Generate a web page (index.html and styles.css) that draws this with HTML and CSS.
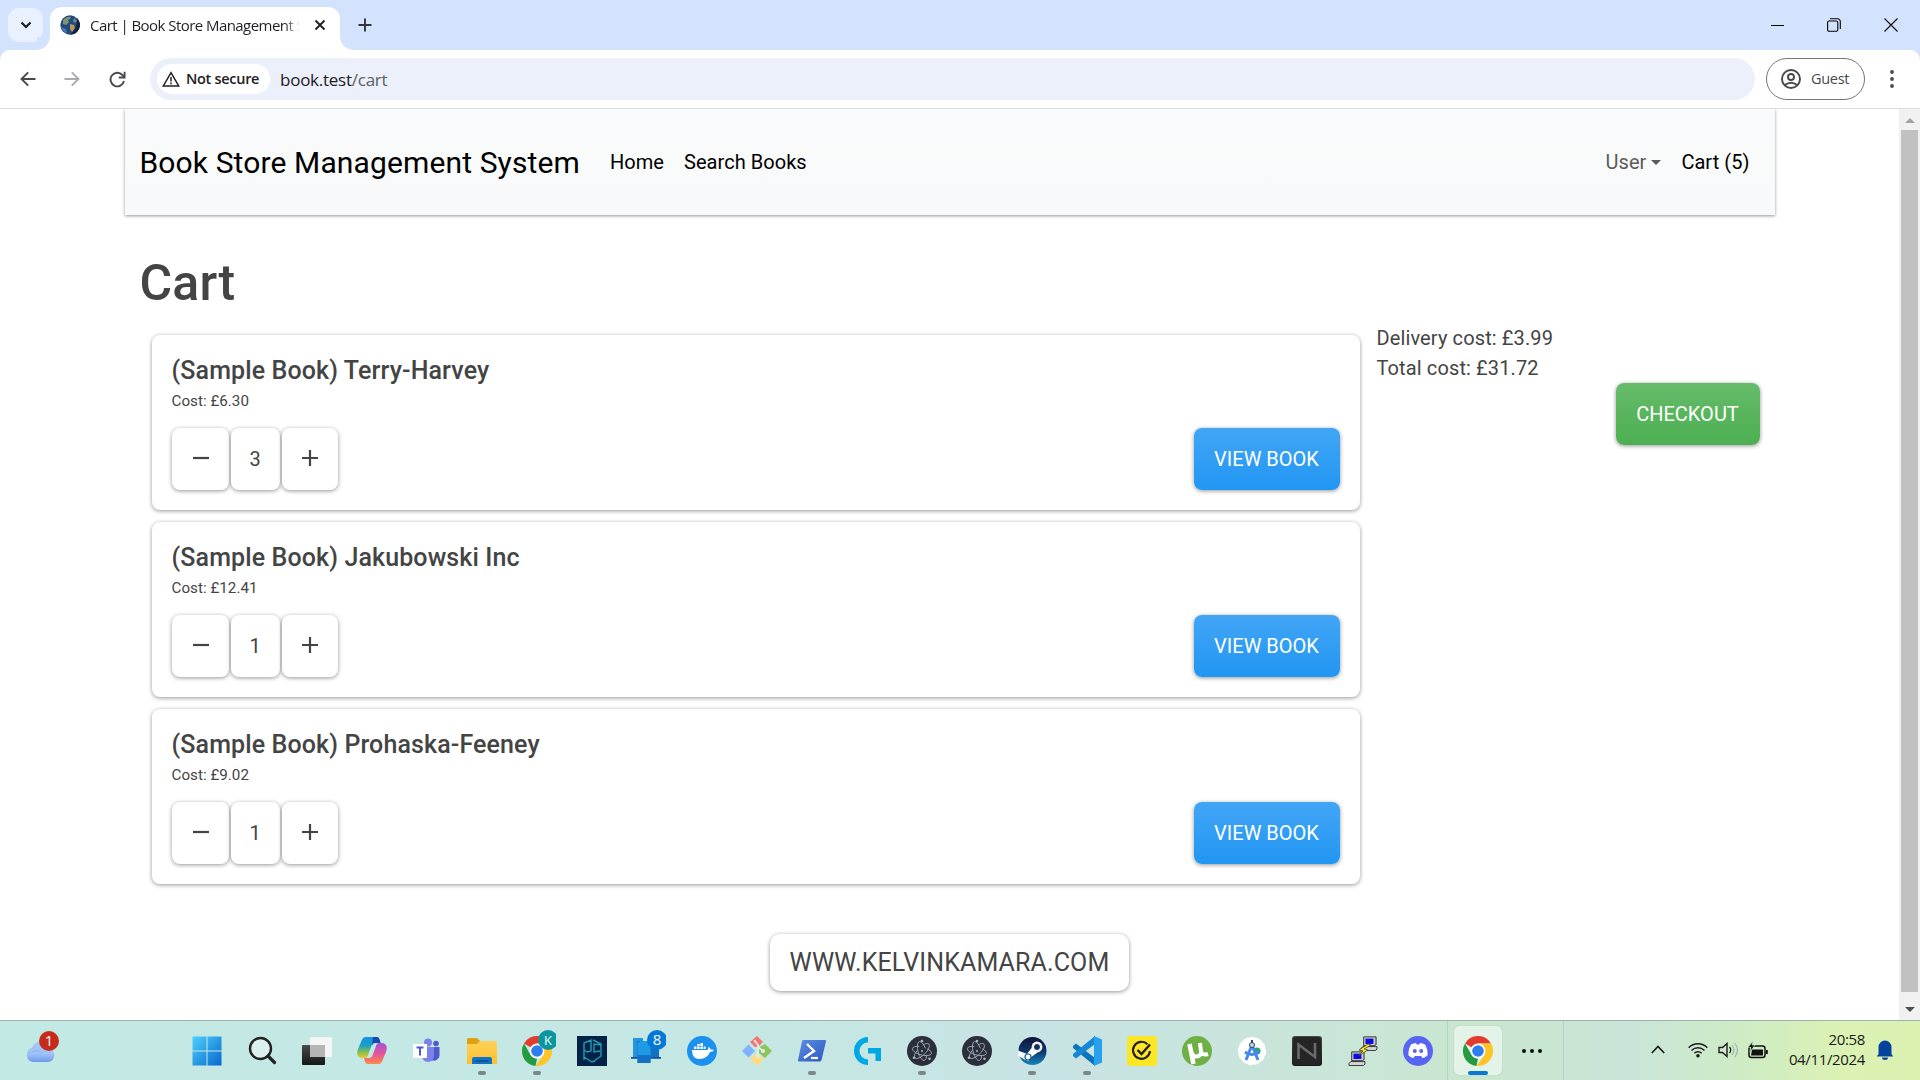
FILE: index.html
```html
<!DOCTYPE html>
<html lang="en">
<head>
<meta charset="utf-8">
<title>Cart | Book Store Management System</title>
<link rel="stylesheet" href="styles.css">
</head>
<body>
<svg class="defs" width="0" height="0">
  <defs>
    <linearGradient id="gwin" x1="0" y1="0" x2="1" y2="1"><stop offset="0" stop-color="#4fd0fb"/><stop offset="1" stop-color="#0568cf"/></linearGradient>
    <linearGradient id="gcloud" x1="0" y1="0" x2="0" y2="1"><stop offset="0" stop-color="#a5c6f5"/><stop offset=".6" stop-color="#9fc3f5"/><stop offset="1" stop-color="#6d98ec"/></linearGradient>
    <linearGradient id="gdark" x1="0" y1="0" x2="0" y2="1"><stop offset="0" stop-color="#4a4a4a"/><stop offset="1" stop-color="#161616"/></linearGradient>
    <linearGradient id="gco1" x1="0" y1="0" x2="0" y2="1"><stop offset="0" stop-color="#1593e6"/><stop offset=".4" stop-color="#199fc9"/><stop offset=".7" stop-color="#7cbf56"/><stop offset="1" stop-color="#f0c52a"/></linearGradient>
    <linearGradient id="gco2" x1="0" y1="0" x2="0" y2="1"><stop offset="0" stop-color="#a254dc"/><stop offset=".5" stop-color="#e5549a"/><stop offset="1" stop-color="#ff8a4a"/></linearGradient>
    <linearGradient id="gfold" x1="0" y1="0" x2="0" y2="1"><stop offset="0" stop-color="#ffd257"/><stop offset="1" stop-color="#fcc02e"/></linearGradient>
    <linearGradient id="gsteam" x1="0" y1="0" x2="0" y2="1"><stop offset="0" stop-color="#10133a"/><stop offset=".5" stop-color="#0d3567"/><stop offset="1" stop-color="#1787bd"/></linearGradient>
    <linearGradient id="gps" x1="0" y1="0" x2="1" y2="1"><stop offset="0" stop-color="#5a8fe0"/><stop offset="1" stop-color="#2d57c4"/></linearGradient>
    <symbol id="chrome" viewBox="0 0 30 30">
      <path d="M15 15 2.01 7.5A15 15 0 0 1 28 7.5L15 7.5z" fill="#e33b2e"/>
      <path d="M2.01 7.5 8.5 18.75A7.5 7.5 0 0 0 15 22.5L13.5 30A15 15 0 0 1 2.01 7.5z" fill="#259a42"/>
      <path d="M15 7.5H28A15 15 0 0 1 13.6 29.95L21.5 18.75z" fill="#fdc526"/>
      <circle cx="15" cy="15" r="7.5" fill="#fff"/><circle cx="15" cy="15" r="5.8" fill="#2d7ff0"/>
    </symbol>
    <symbol id="electron" viewBox="0 0 30 30">
      <circle cx="15" cy="15" r="15" fill="#2c2e3b"/>
      <g fill="none" stroke="#93a9b0" stroke-width=".9"><ellipse cx="15" cy="15" rx="9.8" ry="4" transform="rotate(75 15 15)" stroke-dasharray="32 7"/><ellipse cx="15" cy="15" rx="9.8" ry="4" transform="rotate(15 15 15)" stroke-dasharray="30 8"/><ellipse cx="15" cy="15" rx="9.8" ry="4" transform="rotate(-45 15 15)" stroke-dasharray="31 7"/></g>
      <g fill="#a3b9bf"><circle cx="15" cy="15" r="1"/><circle cx="15" cy="5" r="1.3"/><circle cx="7" cy="21.800" r="1.3"/><circle cx="22.500" cy="22.800" r="1.3"/></g>
    </symbol>
    <symbol id="pc" viewBox="0 0 20 17">
      <path d="M4 1h14v9l-2 1H4z" fill="#c8c8c8" stroke="#222" stroke-width="1"/><path d="M6 3h9v6H6z" fill="#0808e8"/>
      <path d="M3 12h14l2 0v3l-2 1.5H1V14z" fill="#d4d4d4" stroke="#222" stroke-width="1"/>
    </symbol>
  </defs>
</svg>
<div class="screen">
  <header class="tabstrip">
    <button class="tab-search"><svg width="12" height="8" viewBox="0 0 12 8"><path d="M1.500 1.500 6 6l4.500-4.500" fill="none" stroke="#1b1c1f" stroke-width="2.200"/></svg></button>
    <div class="tab">
      <svg width="20" height="20" viewBox="0 0 20 20"><circle cx="10" cy="10" r="9.700" fill="#234a7c"/><path d="M10 19.700A9.700 9.700 0 0 0 17 3q1 10-7 16.700z" fill="#12213f"/><path d="M3 5q4-4 8-3l-1 2-2 1 1 2-3 3-3-1z" fill="#7f9672"/><path d="M10 9l4 1 1 3-3 4-2-3z" fill="#b39b58"/><path d="M14 3l3 3-2 2-2-2z" fill="#6e8a8c"/><path d="M1 12q2 5 6 6l-1-4z" fill="#4c79b5"/></svg>
      <span class="tab-title">Cart | Book Store Management System</span>
      <svg class="tab-close" width="12" height="12" viewBox="0 0 12 12"><path d="M1.500 1.500l9 9m0-9l-9 9" stroke="#202124" stroke-width="1.900"/></svg>
    </div>
    <svg class="new-tab" width="14" height="14" viewBox="0 0 14 14"><path d="M7 .5v13M.5 7h13" stroke="#333539" stroke-width="1.900"/></svg>
    <div class="win-controls">
      <svg width="13" height="13" viewBox="0 0 13 13"><path d="M0 6.500h13" stroke="#000" stroke-width="1"/></svg>
      <svg width="14" height="14" viewBox="0 0 14 14"><rect x=".6" y="3" width="10.200" height="10.200" rx="1.500" fill="none" stroke="#000" stroke-width="1.100"/><path d="M3 .8h7.500a2.800 2.800 0 0 1 2.800 2.800V11" fill="none" stroke="#000" stroke-width="1.100"/></svg>
      <svg width="14" height="14" viewBox="0 0 14 14"><path d="M.5.5l13 13m0-13l-13 13" stroke="#111" stroke-width="1.200"/></svg>
    </div>
  </header>
  <div class="toolbar">
    <svg class="ic-back" width="16" height="16" viewBox="0 0 16 16"><path d="M15.500 8H1.500M8.200 1.300 1.500 8l6.700 6.700" fill="none" stroke="#46484b" stroke-width="1.900"/></svg>
    <svg class="ic-fwd" width="16" height="16" viewBox="0 0 16 16"><path d="M.5 8h14M7.800 1.300 14.500 8l-6.700 6.700" fill="none" stroke="#a9abae" stroke-width="1.900"/></svg>
    <svg class="ic-reload" width="17" height="17" viewBox="0 0 17 17"><path d="M15 10a6.800 6.800 0 1 1-1.600-6L15.300 6" fill="none" stroke="#46484b" stroke-width="1.900"/><path d="M15.600.8V6.500H9.800" fill="none" stroke="#46484b" stroke-width="1.900"/></svg>
    <div class="omnibox">
      <div class="chip"><svg width="18" height="16" viewBox="0 0 18 16"><path d="M9 1.700 16.700 14.900H1.300z" fill="none" stroke="#1f2023" stroke-width="1.500"/><path d="M9 6v4.500M9 11.600v1.700" stroke="#1f2023" stroke-width="1.500"/></svg><span>Not secure</span></div>
      <span class="url">book.test<i>/cart</i></span>
    </div>
    <div class="guest"><svg width="20" height="20" viewBox="0 0 20 20"><g fill="none" stroke="#47494c" stroke-width="1.900"><circle cx="10" cy="10" r="9"/><circle cx="10" cy="8" r="3"/><path d="M3.800 16q6.200-4.600 12.400 0"/></g></svg><span>Guest</span></div>
    <svg class="ic-menu" width="4" height="18" viewBox="0 0 4 18"><g fill="#47494c"><circle cx="2" cy="2" r="1.900"/><circle cx="2" cy="9" r="1.900"/><circle cx="2" cy="16" r="1.900"/></g></svg>
  </div>
  <div class="viewport">
    <div class="page">
      <nav class="navbar">
        <a class="brand">Book Store Management System</a>
        <a class="link">Home</a>
        <a class="link">Search Books</a>
        <a class="link user">User<b class="caret"></b></a>
        <a class="link cart">Cart (5)</a>
      </nav>
      <h1>Cart</h1>
      <div class="cols">
        <div class="items">
          <section class="card">
            <h2>(Sample Book) Terry-Harvey</h2>
            <p class="cost">Cost: £6.30</p>
            <div class="row">
              <button class="qty"><svg width="16" height="16" viewBox="0 0 16 16"><path d="M0 8h16" stroke="#444" stroke-width="2.200"/></svg></button><span class="num">3</span><button class="qty plus"><svg width="16" height="16" viewBox="0 0 16 16"><path d="M0 8h16M8 0v16" stroke="#444" stroke-width="2.200"/></svg></button>
              <button class="btn blue">VIEW BOOK</button>
            </div>
          </section>
          <section class="card">
            <h2>(Sample Book) Jakubowski Inc</h2>
            <p class="cost">Cost: £12.41</p>
            <div class="row">
              <button class="qty"><svg width="16" height="16" viewBox="0 0 16 16"><path d="M0 8h16" stroke="#444" stroke-width="2.200"/></svg></button><span class="num">1</span><button class="qty plus"><svg width="16" height="16" viewBox="0 0 16 16"><path d="M0 8h16M8 0v16" stroke="#444" stroke-width="2.200"/></svg></button>
              <button class="btn blue">VIEW BOOK</button>
            </div>
          </section>
          <section class="card">
            <h2>(Sample Book) Prohaska-Feeney</h2>
            <p class="cost">Cost: £9.02</p>
            <div class="row">
              <button class="qty"><svg width="16" height="16" viewBox="0 0 16 16"><path d="M0 8h16" stroke="#444" stroke-width="2.200"/></svg></button><span class="num">1</span><button class="qty plus"><svg width="16" height="16" viewBox="0 0 16 16"><path d="M0 8h16M8 0v16" stroke="#444" stroke-width="2.200"/></svg></button>
              <button class="btn blue">VIEW BOOK</button>
            </div>
          </section>
        </div>
        <aside class="summary">
          <p>Delivery cost: £3.99</p>
          <p>Total cost: £31.72</p>
          <button class="btn green">CHECKOUT</button>
        </aside>
      </div>
      <a class="site">WWW.KELVINKAMARA.COM</a>
    </div>
    <div class="scrollbar"><i class="up"></i><b class="thumb"></b><i class="down"></i></div>
  </div>
  <footer class="taskbar">
    <div class="weather"><svg width="36" height="34" viewBox="0 0 36 34"><path d="M8 31a7.500 7.500 0 0 1-1-14.500 9 9 0 0 1 17 .5A7.300 7.300 0 0 1 24 31z" fill="url(#gcloud)"/><path d="M6 22q6-5 11 0" fill="none" stroke="#8fb2ef" stroke-width="1"/><circle cx="24" cy="10" r="10" fill="#c42b1c"/><text x="24" y="15" class="badge-t">1</text></svg></div>
    <div class="app"><svg width="30" height="30" viewBox="0 0 30 30"><path d="M.5.5h14v14H.5zM15.500.5h14v14h-14zM.5 15.500h14v14H.5zM15.500 15.500h14v14h-14z" fill="url(#gwin)"/></svg></div>
    <div class="app"><svg width="30" height="30" viewBox="0 0 30 30"><circle cx="13.500" cy="12.500" r="10.500" fill="#dcefed" stroke="#222" stroke-width="2.400"/><path d="M21 20l6.500 6.500" stroke="#222" stroke-width="3.200" stroke-linecap="round"/></svg></div>
    <div class="app"><svg width="30" height="30" viewBox="0 0 30 30"><rect x="0" y="9" width="23" height="20" rx="1" fill="url(#gdark)"/><rect x="8" y="1" width="22" height="20" rx="1" fill="#f5f5f5"/><path d="M8 9h15v12H8z" fill="#b5b5b5"/></svg></div>
    <div class="app"><svg width="30" height="30" viewBox="0 0 30 30"><path d="M9 1h10c3 0 3 3 4 6h-5c-2 0-3 1-4 4l-3 8c-1 3-2 3-5 3-5 0-7-3-5-9L4 6c1-3 2-5 5-5z" fill="url(#gco1)"/><path d="M16 1h4c2 0 3 3 3.600 6H18c-2 0-2 1-3 3z" fill="#1748b5"/><path d="M21 28H11c-3 0-3-3-4-6h5c2 0 3-1 4-4l3-8c1-3 2-3 5-3 5 0 7 3 5 9l-3 7c-1 3-2 5-5 5z" fill="url(#gco2)"/></svg></div>
    <div class="app"><svg width="30" height="30" viewBox="0 0 30 30"><circle cx="16" cy="6.500" r="4" fill="#7b83eb"/><circle cx="24" cy="7.500" r="2.800" fill="#5059c9"/><path d="M17 11h10.500v9a5.500 5.500 0 0 1-8 4z" fill="#5059c9"/><path d="M10 11h12v9a6 6 0 0 1-12 0z" fill="#7b83eb"/><path d="M1 8h14v14H1z" fill="#fff"/><path d="M4.500 11.500h7M8 11.500V19.500" stroke="#5059c9" stroke-width="2"/></svg></div>
    <div class="app run"><svg width="30" height="30" viewBox="0 0 30 30"><path d="M0 3.500Q0 2 1.500 2h8.500l3 3-2 5H0z" fill="#dfa10f"/><path d="M0 8h10l3-3h15.500Q30 5 30 6.500V28H0z" fill="url(#gfold)"/><path d="M5 23q0-2 2-2h16q2 0 2 2v5H5z" fill="#1273c6"/><path d="M8.500 25h13" stroke="#0a4b8c" stroke-width="1.500"/></svg></div>
    <div class="app run"><svg width="38" height="42" viewBox="0 0 38 42"><use href="#chrome" x="4" y="6" width="30" height="30"/><circle cx="30" cy="10" r="10" fill="#0d94a0"/><text x="30" y="14.800" class="badge-t small">K</text></svg></div>
    <div class="app"><svg width="30" height="30" viewBox="0 0 30 30"><path d="M0 0h30v30H0z" fill="#032248"/><g fill="none" stroke="#1f9cb0" stroke-width="1.400"><path d="M7 24V7l7-3v11l-4 1-3-2M16 4l8 4v12l-7 5M23 15l-6 1V8l7 1M7 21l8 5 3-1"/></g></svg></div>
    <div class="app"><svg width="38" height="42" viewBox="0 0 38 42"><path d="M5 8h10v19H5z" fill="#2693dc"/><path d="M9 11h22v16H9z" fill="#1272c2"/><path d="M3 27h30v1.800H3z" fill="#10529a"/><path d="M9.500 13l3-2h10v22h-13z" fill="#1f9be5"/><path d="M9.500 25h13v8h-13z" fill="#1470c4"/><circle cx="29" cy="10" r="10" fill="#0378d6"/><text x="29" y="15.300" class="badge-t">8</text></svg></div>
    <div class="app"><svg width="30" height="30" viewBox="0 0 30 30"><circle cx="15" cy="15" r="15" fill="#1c90ed"/><path d="M5 14h15.500q1.500-1 .8-3.300 2.200 1 2.300 2.800 2-.3 3.400.5-1 2-4 2-3 7-10.500 7Q5 23 5 14z" fill="#fff"/><path d="M7 10.500h2.500V13H7zM10.200 10.500h2.500V13h-2.500zM13.400 10.500h2.500V13h-2.500zM16.600 10.500h2V13h-2zM10.200 8h2.500v2h-2.500zM13.400 7h2.500v3h-2.500z" fill="#fff"/></svg></div>
    <div class="app"><svg width="30" height="30" viewBox="0 0 30 30"><path d="M15 0l6 6-5 5h-3L8 6z" fill="#f77370"/><path d="M6.500 8.500 13 15l-6.500 6.500L0 15z" fill="#80b3ff"/><path d="M23 8l7 7-7 7-7-6v-4z" fill="#8dc45c"/><path d="M15 17l7 6-7 7-7-7z" fill="#ffdc83"/><path d="M12 4l4 5v10M16 11l5 4" stroke="#dcefe8" stroke-width="1.800" fill="none"/><circle cx="16" cy="20" r="2" fill="#dcefe8"/><circle cx="21" cy="15" r="2" fill="#dcefe8"/></svg></div>
    <div class="app run"><svg width="30" height="30" viewBox="0 0 30 30"><path d="M6 4h22q1.500 0 1 1.500L24.500 24q-.5 1.500-2 1.500H2Q.5 25.500 1 24L5 5.500Q5.300 4 6 4z" fill="url(#gps)"/><path d="M10 8l7 7-10 7" fill="none" stroke="#fff" stroke-width="2.400"/><path d="M14 22h7" stroke="#fff" stroke-width="2.200"/></svg></div>
    <div class="app"><svg width="30" height="30" viewBox="0 0 30 30"><path d="M16 1v5.500a8.500 8.500 0 0 0 0 17V29A14 14 0 0 1 16 1zM16 12h13v13h-5.500v-7.500H16z" fill="#00a8e4"/></svg></div>
    <div class="app run"><svg width="30" height="30"><use href="#electron"/></svg></div>
    <div class="app"><svg width="30" height="30"><use href="#electron"/></svg></div>
    <div class="app run"><svg width="30" height="30" viewBox="0 0 30 30"><circle cx="15.500" cy="15" r="14" fill="url(#gsteam)"/><path d="M1 14.500l9 3.500 4.500-6 6 4.500-5.500 4-3.500 4.500-4-1.500L1.500 20z" fill="#fff"/><circle cx="20" cy="11" r="5.400" fill="#fff"/><circle cx="20" cy="11" r="3.500" fill="#0f2e5c" stroke="#fff"/><circle cx="11" cy="21" r="3" fill="none" stroke="#0e5b94" stroke-width="1.200"/></svg></div>
    <div class="app run"><svg width="30" height="30" viewBox="0 0 30 30"><path d="M1 10l3-2.500L23 22v8L1 12z" fill="#0b74bd"/><path d="M1 20l3 2.500L23 8V0L1 18z" fill="#1687d3"/><path d="M22 0l8 3.500v23L22 30z" fill="#27a0ee"/></svg></div>
    <div class="app"><svg width="30" height="30" viewBox="0 0 30 30"><rect width="30" height="30" rx="3" fill="#fde725"/><path d="M20.500 8.200A8.500 8.500 0 1 0 23 15" fill="none" stroke="#221f1a" stroke-width="2.200"/><path d="M10.500 14l4 4L23 8.500" fill="none" stroke="#221f1a" stroke-width="2.400"/></svg></div>
    <div class="app"><svg width="30" height="30" viewBox="0 0 30 30"><circle cx="15" cy="15" r="15" fill="#6fb044"/><path d="M7.500 8l4 20" stroke="#fff" stroke-width="4.500"/><path d="M9.500 16q1 5 5.500 4.500 4.500-1 4-5L18 7M19 15q1 5 7 3" fill="none" stroke="#fff" stroke-width="4"/></svg></div>
    <div class="app"><svg width="30" height="30" viewBox="0 0 30 30"><circle cx="15" cy="15" r="13.700" fill="#fff" stroke="#fff" stroke-dasharray="4 3"/><circle cx="20" cy="15" r="3.500" fill="#2ca56b"/><path d="M15 9 9 24M15 9l6 15M8 16q7 5 14 0" fill="none" stroke="#4687ef" stroke-width="3"/><circle cx="15" cy="9" r="2.500" fill="#c5d7ea" stroke="#35455c"/><path d="M15 4v3" stroke="#35455c" stroke-width="2"/></svg></div>
    <div class="app"><svg width="30" height="30" viewBox="0 0 30 30"><rect width="30" height="30" rx="3" fill="url(#gdark)"/><rect x="1" y="1" width="28" height="28" rx="3" fill="#252525"/><path d="M6.500 23V8.500L23 21V7" fill="none" stroke="#6b6b6b" stroke-width="2.600"/></svg></div>
    <div class="app"><svg width="30" height="30" viewBox="0 0 30 30"><use href="#pc" x="12" y="0" width="18" height="15"/><use href="#pc" x="0" y="15" width="18" height="15"/><path d="M20 8l-9 6 4 1-5 5 10-6-4-1 7-4z" fill="#ffe81c" stroke="#333" stroke-width=".7"/></svg></div>
    <div class="app"><svg width="30" height="30" viewBox="0 0 30 30"><circle cx="15" cy="15" r="15" fill="#5865f2"/><path d="M8 8.500q2.500-1.200 5-1.400l.7 1.400h2.600l.7-1.400q2.500.2 5 1.400 3 5 2.500 11-2.500 2-5 2.500l-1.300-2h-6.400l-1.300 2q-2.500-.5-5-2.500Q5 13.500 8 8.500z" fill="#fff"/><circle cx="11.800" cy="15" r="2" fill="#5865f2"/><circle cx="18.200" cy="15" r="2" fill="#5865f2"/></svg></div>
    <div class="active-zone"><div class="active"><svg width="30" height="30"><use href="#chrome"/></svg></div><svg width="20" height="4" viewBox="0 0 20 4"><g fill="#111"><circle cx="2" cy="2" r="2"/><circle cx="10" cy="2" r="2"/><circle cx="18" cy="2" r="2"/></g></svg></div>
    <div class="tray">
      <svg width="14" height="9" viewBox="0 0 14 9"><path d="M.8 8 7 1.500 13.200 8" fill="none" stroke="#181818" stroke-width="1.600"/></svg>
      <svg class="wifi" width="20" height="16" viewBox="0 0 20 16"><g fill="none" stroke="#1c1c1c" stroke-width="1.400"><path d="M.7 5.700a13 13 0 0 1 18.600 0M3.500 8.500a9.200 9.200 0 0 1 13 0M6.300 11.200a5.300 5.300 0 0 1 7.400 0"/></g><circle cx="10" cy="13.700" r="1.800" fill="#1c1c1c"/></svg>
      <svg class="vol" width="21" height="16" viewBox="0 0 21 16"><path d="M1 5.500h3.500L9 1.500v13l-4.500-4H1z" fill="none" stroke="#1c1c1c" stroke-width="1.400"/><path d="M11.500 5q2.500 3 0 6" fill="none" stroke="#1c1c1c" stroke-width="1.300"/><path d="M14 3q4 5 0 10M16.800 1q5.500 7 0 14" fill="none" stroke="#9fb5a5" stroke-width="1.200"/></svg>
      <svg class="bat" width="20" height="18" viewBox="0 0 20 18"><rect x="1" y="5" width="16" height="11.500" rx="2.500" fill="none" stroke="#111" stroke-width="1.500"/><path d="M3 14.500l1-6h11v6z" fill="#111"/><path d="M18 9h1.800v4H18z" fill="#111"/><path d="M5 0 0 6.500h3L2 11l5-7H4z" fill="#111" stroke="#cfe9c6" stroke-width=".6"/></svg>
      <div class="clock"><span>20:58</span><span>04/11/2024</span></div>
      <svg class="bell" width="18" height="20" viewBox="0 0 18 20"><path d="M2.500 14V7a6.500 6.500 0 0 1 13 0v7l1.700 2.500H.8zM6 17.500h6a3 2.500 0 0 1-6 0z" fill="#04429c"/></svg>
    </div>
  </footer>
</div>
</body>
</html>
```
FILE: styles.css
```css
* { box-sizing: border-box; }
body { margin: 0; overflow: hidden; background: #fff; font-family: Roboto, sans-serif; color: #444; }
svg { display: block; flex: none; }
.defs { position: absolute; }
button { border: 0; padding: 0; font: inherit; color: inherit; background: none; }
h1, h2, p { margin: 0; }
.screen { width: 1920px; height: 1080px; display: flex; flex-direction: column; background: #d3e3fd; }

.tabstrip { height: 50px; display: flex; align-items: center; padding-left: 8px; flex: none; font-family: "Open Sans", "Noto Sans", sans-serif; }
.tab-search { width: 35px; height: 34px; border-radius: 11px; background: #e9f0fe; display: grid; place-items: center; margin-right: 7px; }
.tab { width: 290px; height: 43px; margin-top: 7px; background: #fff; border-radius: 12px 12px 0 0; display: flex; align-items: center; padding: 0 14px 7px 10px; position: relative; }
.tab::before, .tab::after { content: ""; position: absolute; bottom: 0; width: 13px; height: 13px; }
.tab::before { left: -13px; background: radial-gradient(circle at 0 0, #d3e3fd 12.500px, #fff 13px); }
.tab::after { right: -13px; background: radial-gradient(circle at 100% 0, #d3e3fd 12.500px, #fff 13px); }
.tab-title { margin-left: 10px; width: 212px; font-size: 15px; letter-spacing: -.55px; color: #1f2023; white-space: nowrap; overflow: hidden; -webkit-mask-image: linear-gradient(90deg, #000 92%, transparent 99%); mask-image: linear-gradient(90deg, #000 92%, transparent 99%); }
.tab-close { margin-left: auto; }
.new-tab { margin-left: 18px; }
.win-controls { margin-left: auto; display: flex; align-items: center; gap: 43px; padding-right: 22px; }

.toolbar { height: 59px; flex: none; background: #fff; border-bottom: 1px solid #dcdfdc; border-radius: 10px 10px 0 0; display: flex; align-items: center; padding-left: 20px; font-family: "Open Sans", "Noto Sans", sans-serif; }
.ic-fwd { margin-left: 28px; }
.ic-reload { margin-left: 29px; }
.omnibox { margin-left: 24px; width: 1605px; height: 42px; border-radius: 21px; background: #ebf0fa; display: flex; align-items: center; padding-left: 7px; }
.chip { width: 113px; height: 30px; border-radius: 15px; background: #fff; display: flex; align-items: center; padding-left: 5px; gap: 6px; font-size: 14.500px; font-weight: 600; letter-spacing: -.3px; color: #1f2023; white-space: nowrap; }
.chip span, .guest span { padding-bottom: 2px; }
.url { margin-left: 10px; font-size: 17px; letter-spacing: -.25px; color: #1f2023; }
.url i { font-style: normal; color: #5b5e63; }
.guest { margin-left: 11px; width: 99px; height: 42px; border: 1.500px solid #747775; border-radius: 21px; display: flex; align-items: center; padding-left: 14px; gap: 10px; font-size: 14.500px; letter-spacing: -.3px; color: #47494c; }
.ic-menu { margin-left: 25px; }

.viewport { height: 911px; flex: none; display: flex; background: #fff; }
.page { width: 1899px; display: flex; flex-direction: column; align-items: center; }
.navbar { width: 1650px; height: 106px; background: linear-gradient(#f9fafc, #f9fafa 45%, #f8f9fb); box-shadow: 0 1px 3px rgba(0, 0, 0, .42); clip-path: inset(0 -6px -6px -6px); display: flex; align-items: center; padding: 0 25px 0 15px; font-size: 20px; letter-spacing: .05px; color: #000; white-space: nowrap; }
.brand { font-size: 30px; letter-spacing: .125px; margin-right: 30px; }
.link { margin-right: 20px; }
.user { margin-left: auto; color: #5b5b5b; display: flex; align-items: center; }
.caret { margin-left: 5px; border: 5px solid transparent; border-top-color: #5b5b5b; border-bottom: 0; }
.cart { margin-right: 0; }
h1 { width: 1620px; margin-top: 38px; font-size: 50px; line-height: 60px; font-weight: 500; letter-spacing: .2px; }
.cols { width: 1650px; display: flex; padding: 10px 15px 0 15px; }
.items { width: 1220px; padding: 12px 0 0 12px; display: flex; flex-direction: column; gap: 12px; }
.card { width: 1208px; height: 175px; border-radius: 8px; padding: 21px 20px 20px; background: #fff; box-shadow: 0 1px 4px rgba(0, 0, 0, .42); }
.card h2 { font-size: 25px; line-height: 30px; font-weight: 500; letter-spacing: .12px; }
.cost { font-size: 15.200px; line-height: 24px; margin-top: 3px; letter-spacing: .02px; }
.row { display: flex; margin-top: 15px; align-items: center; }
.qty, .num { height: 62px; border-radius: 8px; display: grid; place-items: center; box-shadow: 0 1px 4px rgba(0, 0, 0, .42); background: #fff; font-size: 20px; }
.qty { width: 57px; padding: 0 0 2px 1px; }
.plus { width: 56px; padding-left: 0; }
.num { width: 49px; margin: 0 2px; }
.btn { height: 62px; border-radius: 8px; color: #fff; font-size: 20px; box-shadow: 0 1px 4px rgba(0, 0, 0, .42); white-space: nowrap; }
.blue { width: 146px; margin-left: auto; background: linear-gradient(#42a5f5, #2196f3); }
.green { width: 144px; background: linear-gradient(#66bb6a, #4caf50); align-self: flex-end; }
.summary { width: 400px; padding-left: 17px; display: flex; flex-direction: column; font-size: 20px; line-height: 30px; }
.summary p { letter-spacing: .12px; }
.site { margin-top: 50px; width: 359px; height: 57px; border-radius: 10px; display: grid; place-items: center; font-size: 25px; letter-spacing: .12px; box-shadow: 0 1px 4px rgba(0, 0, 0, .42); }

.scrollbar { width: 21px; background: #f1f1f1; display: flex; flex-direction: column; align-items: center; }
.scrollbar i { border: 5px solid transparent; flex: none; }
.up { margin: 4px 0 7px; border-bottom-color: #a3a3a3 !important; }
.down { margin: 15px 0 0; border-top-color: #505050 !important; }
.thumb { width: 17px; height: 862px; background: #c1c1c1; }

.taskbar { height: 60px; flex: none; border-top: 1px solid #9db3b0; background: linear-gradient(90deg, #c3e9e4, #c5e7e4 40%, #c8e3e3 55%, #c9e6d6 72%, #c8e7cd 77%, #c9e5d8 85%, #cfecc4 91%, #dbf2b4 96%, #daf1b0); display: flex; align-items: center; }
.weather { width: 179px; padding: 0 0 6px 25px; }
.badge-t { fill: #fff; font: 15px "Open Sans", sans-serif; text-anchor: middle; }
.small { font-size: 13px; font-weight: 600; fill: #b8e6e2; }
.app { width: 55.060px; height: 58px; display: grid; place-items: center; position: relative; flex: none; }
.run::after { content: ""; position: absolute; left: calc(50% - 4px); top: 49px; width: 8px; height: 4px; border-radius: 2px; background: #7b8786; }
.active-zone { margin-left: 2px; width: 117px; height: 59px; border: solid #b5d3c5; border-width: 0 1px; display: flex; align-items: center; padding-left: 6px; gap: 20px; flex: none; }
.active { width: 48px; height: 49px; border-radius: 5px; background: #e3f3e8; box-shadow: 0 0 1px rgba(0, 0, 0, .25); display: grid; place-items: center; position: relative; }
.active::after { content: ""; position: absolute; left: 14px; bottom: 0; width: 20px; height: 4px; border-radius: 2px; background: #0878d4; }
.tray { flex: 1; display: flex; align-items: center; padding: 0 0 2px 87px; }
.wifi { margin-left: 23px; }
.vol { margin-left: 10px; }
.bat { margin-left: 9px; }
.clock { margin-left: auto; padding-bottom: 2px; display: flex; flex-direction: column; text-align: right; font: 15px/20px "Open Sans", "Noto Sans", sans-serif; letter-spacing: -.35px; color: #1a1a1a; }
.bell { margin: 0 26px 0 11px; }
```
